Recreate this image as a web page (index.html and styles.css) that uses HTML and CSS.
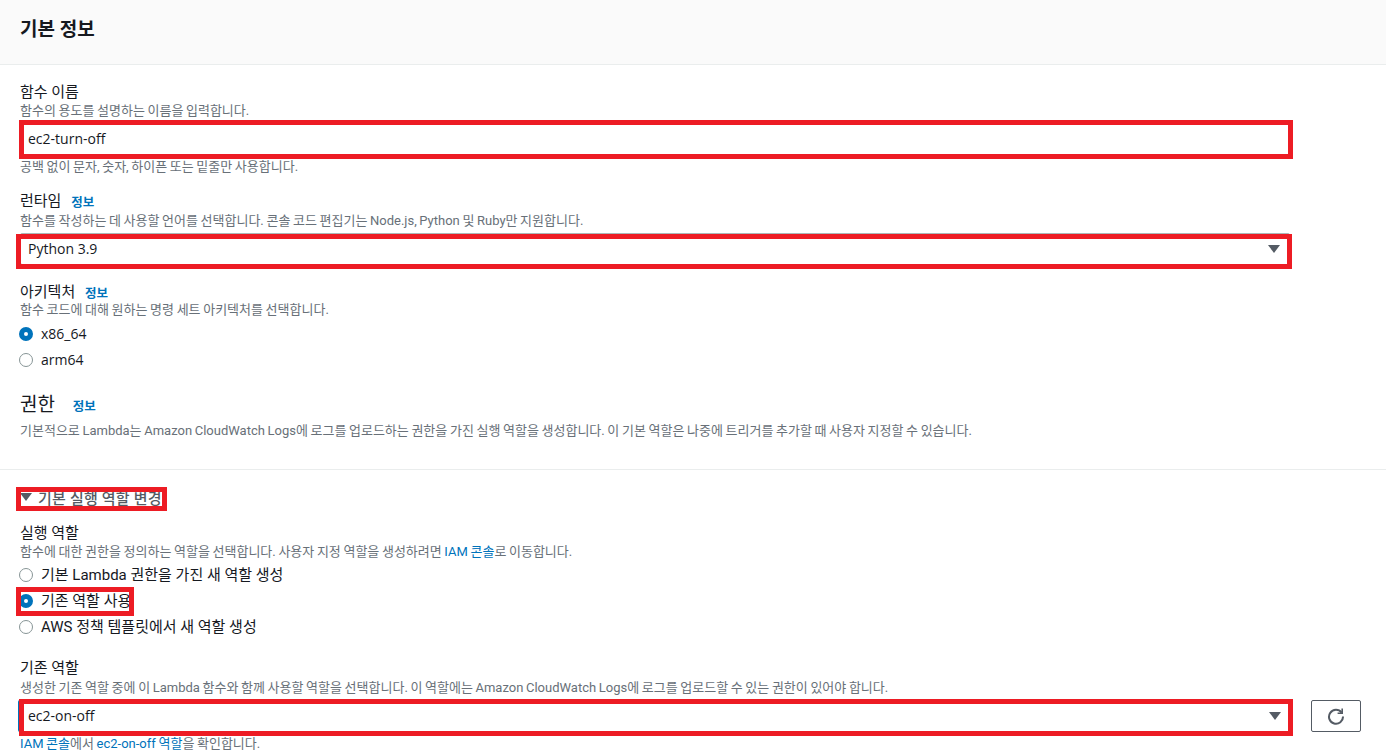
FILE: index.html
```html
<!DOCTYPE html>
<html lang="ko">
<head>
<meta charset="utf-8">
<title>기본 정보</title>
<link rel="stylesheet" href="styles.css">
</head>
<body>
<main class="panel">
  <header class="panel-head"><h2>기본 정보</h2></header>
  <section class="panel-body">
    <div class="field name-field">
      <div class="label">함수 이름</div>
      <div class="hint">함수의 용도를 설명하는 이름을 입력합니다.</div>
      <div class="control">ec2-turn-off</div>
      <div class="hint">공백 없이 문자, 숫자, 하이픈 또는 밑줄만 사용합니다.</div>
    </div>
    <div class="field runtime-field">
      <div class="label">런타임 <a class="info">정보</a></div>
      <div class="hint">함수를 작성하는 데 사용할 언어를 선택합니다. 콘솔 코드 편집기는 Node.js, Python 및 Ruby만 지원합니다.</div>
      <div class="control select">Python 3.9<span class="caret"></span></div>
    </div>
    <div class="field arch-field">
      <div class="label">아키텍처 <a class="info">정보</a></div>
      <div class="hint">함수 코드에 대해 원하는 명령 세트 아키텍처를 선택합니다.</div>
      <div class="radios">
        <div class="radio on latin">x86_64</div>
        <div class="radio latin">arm64</div>
      </div>
    </div>
    <div class="perm">
      <h3>권한 <a class="info">정보</a></h3>
      <div class="hint">기본적으로 Lambda는 Amazon CloudWatch Logs에 로그를 업로드하는 권한을 가진 실행 역할을 생성합니다. 이 기본 역할은 나중에 트리거를 추가할 때 사용자 지정할 수 있습니다.</div>
    </div>
  </section>
  <section class="role">
    <div class="summary"><span class="tri"></span>기본 실행 역할 변경</div>
    <div class="field exec-field">
      <div class="label">실행 역할</div>
      <div class="hint">함수에 대한 권한을 정의하는 역할을 선택합니다. 사용자 지정 역할을 생성하려면 <a class="link">IAM 콘솔</a>로 이동합니다.</div>
      <div class="radios">
        <div class="radio">기본 Lambda 권한을 가진 새 역할 생성</div>
        <div class="radio on">기존 역할 사용</div>
        <div class="radio">AWS 정책 템플릿에서 새 역할 생성</div>
      </div>
    </div>
    <div class="field existing-field">
      <div class="label">기존 역할</div>
      <div class="hint">생성한 기존 역할 중에 이 Lambda 함수와 함께 사용할 역할을 선택합니다. 이 역할에는 Amazon CloudWatch Logs에 로그를 업로드할 수 있는 권한이 있어야 합니다.</div>
      <div class="select-row">
        <div class="control select focus">ec2-on-off<span class="caret"></span></div>
        <button class="refresh" type="button" aria-label="새로 고침">
          <svg width="18" height="18" viewBox="0 0 18 18" fill="none" stroke="#545b64" stroke-width="2"><path d="M14.6 5.6A7 7 0 1 0 16 9.5"/><path d="M15.2 1.6v4.6h-4.6" stroke-width="1.6"/></svg>
        </button>
      </div>
      <div class="hint last"><a class="link">IAM 콘솔</a>에서 <a class="link">ec2-on-off</a> <a class="link">역할</a>을 확인합니다.</div>
    </div>
  </section>
</main>
<div class="mark m1"></div>
<div class="mark m2"></div>
<div class="mark m3"></div>
<div class="mark m4"></div>
<div class="mark m5"></div>
</body>
</html>
```
FILE: styles.css
```css
*, *::before { box-sizing: border-box; }
html, body { margin: 0; height: 751px; overflow: hidden; background: #fff; }
body {
  position: relative;
  font-family: Roboto, "Noto Sans CJK KR", sans-serif;
  font-size: 15px;
  color: #16191f;
}
.panel-head {
  height: 65px;
  padding: 18px 20px 0;
  background: #fafafa;
  border-bottom: 1px solid #eaeded;
}
h2 { margin: 0; font-size: 19px; line-height: 24px; font-weight: 700; }
.panel-body { padding: 16px 96px 0 20px; height: 405px; border-bottom: 1px solid #eaeded; }
.label { height: 21px; font-size: 15px; line-height: 20px; padding-top: 1px; }
.hint {
  font-size: 13px;
  line-height: 17px;
  word-spacing: -0.6px;
  color: #687078;
}
.hint.last { line-height: 15px; margin-top: 4px; }
.info {
  color: #0073bb;
  font-size: 12.5px;
  line-height: 12px;
  font-weight: 700;
  margin-left: 6px;
  vertical-align: -1px;
}
.link { color: #0073bb; }
.control {
  font-family: "Open Sans", "Noto Sans CJK KR", sans-serif;
  height: 32px;
  margin: 4px 0 3px;
  padding: 0 7px;
  line-height: 30px;
  font-size: 14px;
  border: 1px solid #aab7b8;
  border-radius: 2px;
  position: relative;
}
.select { margin-top: 4px; }
.runtime-field .hint { margin-top: 1px; }
.caret {
  position: absolute;
  right: 9px;
  top: 11px;
  border: 6px solid transparent;
  border-top: 8px solid #545b64;
  border-bottom: 0;
}
.runtime-field { margin-top: 15px; }
.arch-field { margin-top: 16px; }
.arch-field .hint { margin-top: -1px; }
.radios { margin-top: 2px; }
.arch-field .radios { margin-top: 3px; }
.radio {
  position: relative;
  height: 26px;
  line-height: 26px;
  padding-left: 21px;
}
.radio.latin { font-family: "Open Sans", sans-serif; font-size: 14px; }
.radio::before {
  content: "";
  position: absolute;
  left: -1px;
  top: 6px;
  width: 14px;
  height: 14px;
  border: 1px solid #879596;
  border-radius: 50%;
  background: #fff;
}
.radio.on::before { border: 5px solid #0073bb; }
.perm { margin-top: 18px; }
h3 { height: 28px; margin: 0 0 3px; font-size: 19px; line-height: 28px; font-weight: 400; }
h3 .info { margin-left: 13px; vertical-align: 0; }
.role { padding: 17px 25px 0 20px; }
.summary {
  display: flex;
  align-items: center;
  height: 20px;
  font-size: 15px;
  font-weight: 500;
  letter-spacing: 0.2px;
  color: #545b64;
}
.tri {
  width: 0;
  height: 0;
  margin-right: 6px;
  border: 6px solid transparent;
  border-top: 8px solid #545b64;
  border-bottom: 0;
}
.exec-field { margin-top: 15px; }
.existing-field { margin-top: 17px; }
.existing-field .hint:not(.last) { margin-top: 1px; }
.select-row { display: flex; gap: 20px; margin-top: 4px; align-items: center; }
.select-row .control { flex: 1; margin: 0; }
.focus { box-shadow: -2px 0 0 #0073bb; border-color: #0073bb; }
.refresh {
  width: 50px;
  height: 32px;
  padding: 0;
  display: flex;
  align-items: center;
  justify-content: center;
  border: 1px solid #545b64;
  border-radius: 2px;
  background: #fff;
}
/* red annotations drawn over the screenshot */
.mark { position: absolute; border: 5px solid #ed1c24; pointer-events: none; }
.m1 { left: 19px; top: 120px; width: 1274px; height: 39px; }
.m2 { left: 16px; top: 234px; width: 1276px; height: 35px; }
.m3 { left: 16px; top: 487px; width: 151px; height: 24px; }
.m4 { left: 16px; top: 587px; width: 118px; height: 29px; }
.m5 { left: 19px; top: 699px; width: 1274px; height: 37px; }
```
